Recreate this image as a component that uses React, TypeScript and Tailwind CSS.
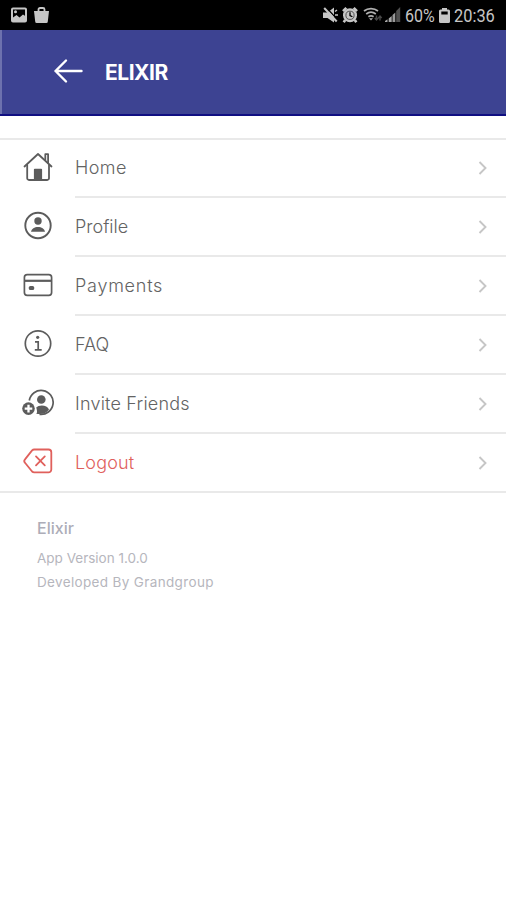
import React from "react";

interface MenuItem {
    label: string;
    icon: React.ReactNode;
    textClass: string;
}

function HomeIcon() {
    return (
        <svg width="32" height="32" viewBox="0 0 32 32" fill="none" stroke="#5c5c5c" strokeWidth="1.8" strokeLinecap="round" strokeLinejoin="round">
            <path d="M2.500 15.500 16 3l13.500 12.500" />
            <path d="M5.200 14v13.200a1.800 1.800 0 0 0 1.800 1.800h18.200a1.800 1.800 0 0 0 1.800-1.800V14" />
            <path d="M23.300 9V3.200h2.800V12" />
            <path d="M12.800 28.500V18.600h6.400v9.900z" fill="#5c5c5c" />
        </svg>
    );
}

function ProfileIcon() {
    return (
        <svg width="32" height="32" viewBox="0 0 32 32" fill="#5c5c5c">
            <circle cx="16" cy="15.500" r="12.700" fill="none" stroke="#5c5c5c" strokeWidth="1.900" />
            <circle cx="16" cy="11" r="3.700" />
            <path d="M9 21.700c.6-3 3.400-4.700 7-4.700s6.400 1.700 7 4.700z" />
        </svg>
    );
}

function CardIcon() {
    return (
        <svg width="32" height="32" viewBox="0 0 32 32" fill="none" stroke="#5c5c5c" strokeWidth="1.700">
            <rect x="2.400" y="5.600" width="27.200" height="20.800" rx="2.800" />
            <path d="M2.400 11.800h27.200" strokeWidth="2.200" />
            <rect x="6.800" y="17" width="5.400" height="4" rx="1.600" fill="#5c5c5c" stroke="none" />
        </svg>
    );
}

function InfoIcon() {
    return (
        <svg width="32" height="32" viewBox="0 0 32 32" fill="none" stroke="#5c5c5c" strokeWidth="1.700">
            <circle cx="16" cy="15.500" r="12.700" />
            <circle cx="15.700" cy="9.300" r="1.600" fill="#5c5c5c" stroke="none" />
            <path d="M13 13.800h3.200v7.900M12.800 21.900h6.900" />
        </svg>
    );
}

function InviteIcon() {
    return (
        <svg width="32" height="32" viewBox="0 0 32 32" fill="#5c5c5c">
            <path d="M7.300 13.500A12 12 0 1 1 17.500 27.300" fill="none" stroke="#5c5c5c" strokeWidth="1.700" />
            <circle cx="19.300" cy="12.500" r="4.300" />
            <path d="M14.200 26.700c1.500-.5.700-4.200 0-6.200 1.300-1.300 3.300-2 5.600-2 3.400 0 6.100 1.400 7.200 4-2.600 3.700-7.400 5.500-12.800 4.200z" />
            <circle cx="6.500" cy="21.600" r="6.300" />
            <path d="M6.500 17.800v7.600M2.700 21.600h7.600" stroke="#fff" strokeWidth="2.300" />
        </svg>
    );
}

function LogoutIcon() {
    return (
        <svg width="32" height="32" viewBox="0 0 32 32" fill="none" stroke="#e0605c" strokeWidth="1.800" strokeLinecap="round" strokeLinejoin="round">
            <path d="M12.200 4.500h14.300a2.800 2.800 0 0 1 2.800 2.800v17.300a2.800 2.800 0 0 1-2.800 2.800H12.200a3 3 0 0 1-2.100-.9L3 17.800a2.500 2.500 0 0 1 0-3.400l7.100-9a3 3 0 0 1 2.100-.9z" />
            <path d="m14 11.400 8.800 9M22.800 11.400l-8.800 9" />
        </svg>
    );
}

const items: MenuItem[] = [
    { label: "Home", icon: <HomeIcon />, textClass: "text-[#636363] tracking-[0.4px] -mt-px" },
    { label: "Profile", icon: <ProfileIcon />, textClass: "text-[#636363]" },
    { label: "Payments", icon: <CardIcon />, textClass: "text-[#636363] tracking-[0.75px]" },
    { label: "FAQ", icon: <InfoIcon />, textClass: "text-[#636363]" },
    { label: "Invite Friends", icon: <InviteIcon />, textClass: "text-[#636363] tracking-[0.2px]" },
    { label: "Logout", icon: <LogoutIcon />, textClass: "text-[#e0605c] tracking-[0.15px]" },
];

function StatusBar() {
    return (
        <div className="flex h-[30px] items-center justify-between bg-black pl-[11px] pr-[11px] text-[#c6c6c6]">
            <div className="flex items-center gap-[7px]">
                <svg width="16" height="16" viewBox="0 0 16 16" fill="none">
                    <rect x="1" y="1.500" width="14" height="13" rx="1" stroke="#c6c6c6" strokeWidth="2" />
                    <path d="M2 14v-3.500l3.500-2.500 3 2.500L12 7.500l3 2v4.500z" fill="#c6c6c6" />
                    <circle cx="4.500" cy="4.800" r="1.500" fill="#c6c6c6" />
                </svg>
                <svg width="15" height="16" viewBox="0 0 15 16" fill="#c6c6c6">
                    <path d="M0 4h15l-1.200 10.500A1.500 1.500 0 0 1 12.300 16H2.700a1.500 1.500 0 0 1-1.500-1.500z" />
                    <path d="M4.500 5V2.500a1.500 1.500 0 0 1 1.500-1.500h3a1.500 1.500 0 0 1 1.500 1.500V5" fill="none" stroke="#c6c6c6" strokeWidth="1.800" />
                </svg>
            </div>
            <div className="flex items-center">
                <svg width="15" height="16" viewBox="0 0 15 16" fill="#c6c6c6">
                    <path d="M0 5.500h4.500L11 .5v15L4.500 11H0z" />
                    <path d="m2.800 0 12 13" stroke="#000" strokeWidth="1.300" />
                    <path d="m1.200 1 12.500 13.500" stroke="#c6c6c6" strokeWidth="2" />
                    <path d="M12 8h3M12 4.500l2-1.500" stroke="#c6c6c6" strokeWidth="1.500" />
                </svg>
                <svg className="ml-[4px]" width="16" height="16" viewBox="0 0 16 16" fill="#c6c6c6">
                    <circle cx="8" cy="8.300" r="7" />
                    <path d="m1 4.200 3.300-3.300M15 4.200 11.700.9M3.200 13l-1.500 2.200M12.800 13l1.500 2.200" stroke="#c6c6c6" strokeWidth="2.600" />
                    <circle cx="8" cy="8.300" r="4.100" fill="none" stroke="#333" strokeWidth=".8" />
                    <path d="M8 5.300v3.200l2.400 1.300" stroke="#000" strokeWidth="1.300" fill="none" />
                </svg>
                <svg className="ml-[5px]" width="20" height="16" viewBox="0 0 20 16" fill="none" stroke="#b0b0b0" strokeWidth="1.700">
                    <path d="M1 4c4-3.300 10-3.300 14 0M3.200 7c3-2.400 6.600-2.400 9.600 0M5.400 9.800c1.700-1.200 3.500-1.200 5.200 0" />
                    <path d="m6 11.300 2 2.200 2-2.200z" fill="#b0b0b0" stroke="none" />
                    <path d="M13.500 8.500V13M17 9v4.500M11.800 11l1.700 2 1.700-2M15.300 11 17 9l1.700 2" stroke="#484848" strokeWidth="1.400" />
                </svg>
                <svg className="ml-[2px]" width="16" height="16" viewBox="0 0 16 16">
                    <path d="M0 15h2.500v-2.800L0 14zM3.700 15h3V9l-3 2.500z" fill="#a8a8a8" />
                    <path d="M7.500 15h2.800V5.500L7.500 8z" fill="#999" />
                    <path d="M11.200 15h4V0l-4 4z" fill="#505050" />
                </svg>
                <span className="ml-[4px] w-[31px] whitespace-nowrap font-['Roboto',sans-serif] text-[18px] leading-none">
                    <span className="mt-[2px] inline-block origin-left scale-x-[0.89]">60%</span>
                </span>
                <svg className="ml-[3px]" width="11" height="15" viewBox="0 0 11 15" fill="#c6c6c6">
                    <path d="M3 0h5v1.500h1.500A1.500 1.500 0 0 1 11 3v10.500A1.500 1.500 0 0 1 9.500 15h-8A1.500 1.500 0 0 1 0 13.500V3a1.500 1.500 0 0 1 1.500-1.500H3z" />
                    <path d="M2.300 3.500h6.400v3H2.300z" fill="#000" />
                </svg>
                <span className="ml-[4px] w-[41px] whitespace-nowrap font-['Roboto',sans-serif] text-[18px] leading-none">
                    <span className="mt-[2px] inline-block origin-left scale-x-[0.91]">20:36</span>
                </span>
            </div>
        </div>
    );
}

export default function App() {
    return (
        <div className="min-h-[900px] w-full bg-white font-['Inter',sans-serif]">
            <StatusBar />

            <header className="flex h-[86px] items-center border-b-2 border-[#100f82] bg-[#3d4392]">
                <span className="h-full w-[2px] bg-[#6d72ae]" />
                <svg width="30" height="26" viewBox="0 0 30 26" fill="none" stroke="#fff" strokeWidth="2.400" strokeLinecap="round" strokeLinejoin="round" className="-mt-[3px] ml-[51px]">
                    <path d="M13 2.500 2.500 13 13 23.500M2.500 13h26" />
                </svg>
                <h1 className="ml-[22px] text-[21px] font-bold leading-none tracking-[-0.5px] text-white">
                    ELIXIR
                </h1>
            </header>

            <nav className="mt-[22px] border-y-2 border-[#e9e9e9]">
                {items.map((item, i) => (
                    <button key={item.label} className="flex h-[59px] w-full items-center text-left first:h-[58px] last:h-[57px]">
                        <span className="-mt-[4px] flex w-[75px] shrink-0 pl-[21.5px]">{item.icon}</span>
                        <span
                            className={`flex h-full flex-1 items-center justify-between pr-[18px] ${
                                i < items.length - 1 ? "border-b-2 border-[#e9e9e9]" : ""
                            }`}
                        >
                            <span className={`text-[18px] font-light ${item.textClass}`}>{item.label}</span>
                            <svg width="10" height="16" viewBox="0 0 10 16" fill="none" stroke="#c6c6c6" strokeWidth="1.900">
                                <path d="m1.500 2 6 6-6 6" />
                            </svg>
                        </span>
                    </button>
                ))}
            </nav>

            <footer className="pl-[37px] pt-[23px] text-[#b6b6bd]">
                <p className="text-[16px] font-medium leading-[24px] text-[#adadb8]">Elixir</p>
                <p className="mt-[6px] text-[13.5px] leading-[24px]">App Version 1.0.0</p>
                <p className="text-[13.5px] leading-[24px] tracking-[0.35px]">Developed By Grandgroup</p>
            </footer>
        </div>
    );
}
